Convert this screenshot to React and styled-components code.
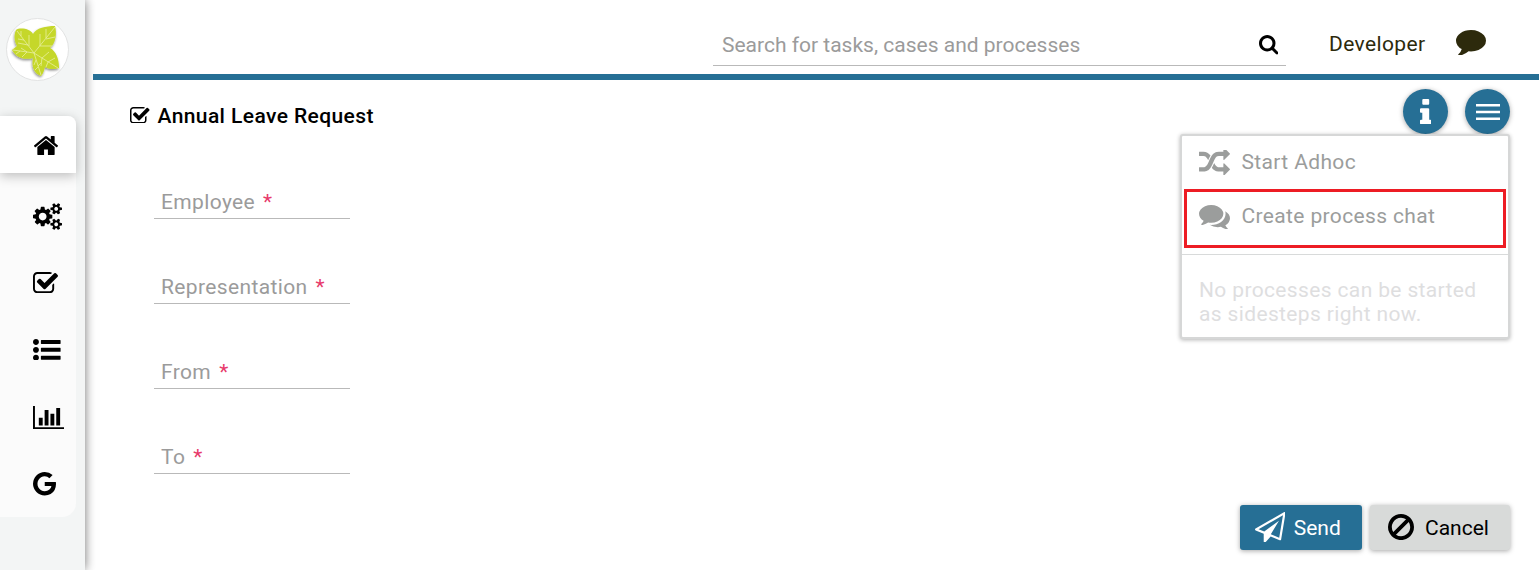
import React from 'react';
import styled, { createGlobalStyle } from 'styled-components';

const GlobalStyle = createGlobalStyle`
  *, *::before, *::after { box-sizing: border-box; }
  html, body, #root { height: 100%; margin: 0; }
  body {
    background: #fff;
    color: #000;
    font-family: Roboto, "Liberation Sans", sans-serif;
    font-size: 21px;
    overflow: hidden;
  }
`;

const BLUE = '#266f95';

/* Each entry: [minX, minY, width, height, path] */
const GLYPHS = {
  home: [97, 253, 1599, 1283, 'M1472 992v480q0 26-19 45t-45 19h-384v-384h-256v384h-384q-26 0-45-19t-19-45v-480q0-1 .5-3t.5-3l575-474 575 474q1 2 1 6zm223-69l-62 74q-8 9-21 11h-3q-13 0-21-7l-692-577-692 577q-12 8-24 7-13-2-21-11l-62-74q-8-10-7-23.5t11-21.5l719-599q32-26 76-26t76 26l244 204v-195q0-14 9-23t23-9h192q14 0 23 9t9 23v408l219 182q10 8 11 21.5t-7 23.5z'],
  cogs: [-64, 0, 1920, 1792, 'M832 896q0-106-75-181t-181-75-181 75-75 181 75 181 181 75 181-75 75-181zm768 512q0-52-38-90t-90-38-90 38-38 90q0 53 37.5 90.5t90.5 37.5 90.5-37.5 37.5-90.5zm0-1024q0-52-38-90t-90-38-90 38-38 90q0 53 37.5 90.5t90.5 37.5 90.5-37.5 37.5-90.5zm-384 421v185q0 10-7 19.5t-16 10.5l-155 24q-11 35-32 76 34 48 90 115 7 11 7 20 0 12-7 19-23 30-82.5 89.5t-78.5 59.5q-11 0-21-7l-115-90q-37 19-77 31-11 108-23 155-7 24-30 24h-186q-11 0-20-7.5t-10-17.5l-23-153q-34-10-75-31l-118 89q-7 7-20 7-11 0-21-8-144-133-144-160 0-9 7-19 10-14 41-53t47-61q-23-44-35-82l-152-24q-10-1-17-9.5t-7-19.5v-185q0-10 7-19.5t16-10.5l155-24q11-35 32-76-34-48-90-115-7-11-7-20 0-12 7-20 22-30 82-89t79-59q11 0 21 7l115 90q34-18 77-32 11-108 23-154 7-24 30-24h186q11 0 20 7.5t10 17.5l23 153q34 10 75 31l118-89q8-7 20-7 11 0 21 8 144 133 144 160 0 8-7 19-12 16-42 54t-45 60q23 48 34 82l152 23q10 2 17 10.5t7 19.5zm640 533v140q0 16-149 31-12 27-30 52 51 113 51 138 0 4-4 7-122 71-124 71-8 0-46-47t-52-68q-20 2-30 2t-30-2q-14 21-52 68t-46 47q-2 0-124-71-4-3-4-7 0-25 51-138-18-25-30-52-149-15-149-31v-140q0-16 149-31 13-29 30-52-51-113-51-138 0-4 4-7 4-2 35-20t59-34 30-16q8 0 46 46.5t52 67.5q20-2 30-2t30 2q51-71 92-112l6-2q4 0 124 70 4 3 4 7 0 25-51 138 17 23 30 52 149 15 149 31zm0-1024v140q0 16-149 31-12 27-30 52 51 113 51 138 0 4-4 7-122 71-124 71-8 0-46-47t-52-68q-20 2-30 2t-30-2q-14 21-52 68t-46 47q-2 0-124-71-4-3-4-7 0-25 51-138-18-25-30-52-149-15-149-31v-140q0-16 149-31 13-29 30-52-51-113-51-138 0-4 4-7 4-2 35-20t59-34 30-16q8 0 46 46.5t52 67.5q20-2 30-2t30 2q51-71 92-112l6-2q4 0 124 70 4 3 4 7 0 25-51 138 17 23 30 52 149 15 149 31z'],
  check: [64, 128, 1663, 1408, 'M1472 930v318q0 119-84.5 203.5t-203.5 84.5h-832q-119 0-203.5-84.5t-84.5-203.5v-832q0-119 84.5-203.5t203.5-84.5h832q63 0 117 25 15 7 18 23 3 17-9 29l-49 49q-10 10-23 10-3 0-9-2-23-6-45-6h-832q-66 0-113 47t-47 113v832q0 66 47 113t113 47h832q66 0 113-47t47-113v-254q0-13 9-22l64-64q10-10 23-10 6 0 12 3 20 8 20 29zm231-489l-814 814q-24 24-57 24t-57-24l-430-430q-24-24-24-57t24-57l110-110q24-24 57-24t57 24l263 263 647-647q24-24 57-24t57 24l110 110q24 24 24 57t-24 57z'],
  list: [0, 192, 1792, 1408, 'M384 1408q0 80-56 136t-136 56-136-56-56-136 56-136 136-56 136 56 56 136zm0-512q0 80-56 136t-136 56-136-56-56-136 56-136 136-56 136 56 56 136zm1408 416v192q0 13-9.5 22.5t-22.5 9.5h-1216q-13 0-22.5-9.5t-9.5-22.5v-192q0-13 9.5-22.5t22.5-9.5h1216q13 0 22.5 9.5t9.5 22.5zm-1408-928q0 80-56 136t-136 56-136-56-56-136 56-136 136-56 136 56 56 136zm1408 416v192q0 13-9.5 22.5t-22.5 9.5h-1216q-13 0-22.5-9.5t-9.5-22.5v-192q0-13 9.5-22.5t22.5-9.5h1216q13 0 22.5 9.5t9.5 22.5zm0-512v192q0 13-9.5 22.5t-22.5 9.5h-1216q-13 0-22.5-9.5t-9.5-22.5v-192q0-13 9.5-22.5t22.5-9.5h1216q13 0 22.5 9.5t9.5 22.5z'],
  chart: [0, 128, 2048, 1536, 'M640 896v512h-256v-512h256zm384-512v1024h-256v-1024h256zm1024 1152v128h-2048v-1536h128v1408h1920zm-640-896v768h-256v-768h256zm384-384v1152h-256v-1152h256z'],
  google: [128, 128, 1505, 1536, 'M896 786h725q12 67 12 128 0 217-91 387.5t-259.5 266.5-386.5 96q-157 0-299-60.5t-245-163.5-163.5-245-60.5-299 60.5-299 163.5-245 245-163.5 299-60.5q300 0 515 201l-209 201q-123-119-306-119-129 0-238.5 65t-173.5 176.5-64 243.5 64 243.5 173.5 176.5 238.5 65q87 0 160-24t120-60 82-82 51.5-87 22.5-78h-436v-264z'],
  search: [64, 128, 1664, 1664, 'M1216 832q0-185-131.5-316.5t-316.5-131.5-316.5 131.5-131.5 316.5 131.5 316.5 316.5 131.5 316.5-131.5 131.5-316.5zm512 832q0 52-38 90t-90 38q-54 0-90-38l-343-342q-179 124-399 124-143 0-273.5-55.5t-225-150-150-225-55.5-273.5 55.5-273.5 150-225 225-150 273.5-55.5 273.5 55.5 225 150 150 225 55.5 273.5q0 220-124 399l343 343q37 37 37 90z'],
  comment: [0, 256, 1792, 1536, 'M1792 896q0 174-120 321.5t-326 233-450 85.5q-70 0-145-8-198 175-460 242-49 14-114 22-17 2-30.5-9t-17.5-29v-1q-3-4-.5-12t2-10 4.5-9.5l6-9 7-8.5 8-9q7-8 31-34.5t34.5-38 31-39.5 32.5-51 27-59 26-76q-157-89-247.5-220t-90.5-281q0-130 71-248.5t191-204.5 286-136.5 348-50.5q244 0 450 85.5t326 233 120 321.5z'],
  comments: [0, 256, 1792, 1408, 'M1408 768q0 139-94 257t-256.5 186.5-353.5 68.5q-86 0-176-16-124 88-278 128-36 9-86 16h-3q-11 0-20.5-8t-11.5-21q-1-3-1-6.5t.5-6.5 2-6l2.5-5 3.5-5.5 4-5 4.5-5 4-4.5q5-6 23-25t26-29.5 22.5-29 25-38.5 20.5-44q-124-72-195-177t-71-224q0-139 94-257t256.5-186.5 353.5-68.5 353.5 68.5 256.5 186.5 94 257zm384 256q0 120-71 224.5t-195 176.5q10 24 20.5 44t25 38.5 22.5 29 26 29.5 23 25q1 1 4 4.5t4.5 5 4 5 3.5 5.5l2.5 5 2 6 .5 6.5-1 6.5q-3 14-13 22t-22 7q-50-7-86-16-154-40-278-128-90 16-176 16-271 0-472-132 58 4 88 4 161 0 309-45t264-129q125-92 192-212t67-254q0-77-23-152 129 71 204 178t75 230z'],
  random: [0, 160, 1792, 1472, 'M666 481q-60 92-137 273-22-45-37-72.5t-40.5-63.5-51-56.5-63-35-81.5-14.5h-224q-14 0-23-9t-9-23v-192q0-14 9-23t23-9h224q250 0 410 225zm1126 799q0 14-9 23l-320 320q-9 9-23 9-13 0-22.5-9.5t-9.5-22.5v-192q-32 0-85 .5t-81 1-73-1-71-5-64-10.5-63-18.5-58-28.5-59-40-55-53.5-56-69.5q59-93 136-273 22 45 37 72.5t40.5 63.5 51 56.5 63 35 81.5 14.5h256v-192q0-14 9-23t23-9q12 0 24 10l319 319q9 9 9 23zm0-896q0 14-9 23l-320 320q-9 9-23 9-13 0-22.5-9.5t-9.5-22.5v-192h-256q-48 0-87 15t-69 45-51 61.5-45 77.5q-32 62-78 171-29 66-49.5 111t-54 105-64 100-74 83-90 68.5-106.5 42-128 16.5h-224q-14 0-23-9t-9-23v-192q0-14 9-23t23-9h224q48 0 87-15t69-45 51-61.5 45-77.5q32-62 78-171 29-66 49.5-111t54-105 64-100 74-83 90-68.5 106.5-42 128-16.5h256v-192q0-14 9-23t23-9q12 0 24 10l319 319q9 9 9 23z'],
  info: [576, 128, 640, 1408, 'M1216 1344v128q0 26-19 45t-45 19h-512q-26 0-45-19t-19-45v-128q0-26 19-45t45-19h64v-384h-64q-26 0-45-19t-19-45v-128q0-26 19-45t45-19h384q26 0 45 19t19 45v576h64q26 0 45 19t19 45zm-128-1152v192q0 26-19 45t-45 19h-256q-26 0-45-19t-19-45v-192q0-26 19-45t45-19h256q26 0 45 19t19 45z'],
  menu: [0, 0, 24, 16, 'M0 0h24v2.6h-24zM0 6.7h24v2.6h-24zM0 13.4h24v2.6h-24z'],
  plane: [0, 0, 1792, 1792, 'M1764 11q33 24 27 64l-256 1536q-5 29-32 45-14 8-31 8-11 0-24-5l-527-215-298 327q-18 21-47 21-14 0-23-4-19-7-30-23.5t-11-36.5v-452l-472-193q-37-14-40-55-3-39 32-59l1664-960q35-21 68 2zm-342 1499l221-1323-1434 827 336 137 863-639-478 797z'],
  ban: [128, 122, 1536, 1542, 'M1440 893q0-161-87-295l-754 753q137 89 297 89 111 0 211.5-43.5t173.5-116.5 116-174.5 43-212.5zm-999 299l755-754q-135-91-300-91-148 0-273 73t-198 199-73 274q0 162 89 299zm1223-299q0 157-61 300t-163.5 246-245 164-298.5 61-298.5-61-245-164-163.5-246-61-300 61-299.5 163.5-245.5 245-164 298.5-61 298.5 61 245 164 163.5 245.5 61 299.5z'],
};

const IconSvg = styled.svg`
  display: block;
  flex: none;
  fill: currentColor;
  margin-bottom: ${(p) => p.$lift}px;
`;

function Icon({ name, width, lift = 0 }) {
  const [x, y, w, h, d] = GLYPHS[name];
  return (
    <IconSvg $lift={lift} viewBox={`${x} ${y} ${w} ${h}`} width={width} height={(width * h) / w} aria-hidden="true">
      <path d={d} />
    </IconSvg>
  );
}

const Shell = styled.div`
  display: flex;
  height: 100%;
`;

const Sidebar = styled.aside`
  flex: none;
  width: 85px;
  background: #f3f5f5;
  box-shadow: 0 0 10px rgba(0, 0, 0, 0.55);
`;

const Logo = styled.div`
  width: 63px;
  height: 63px;
  margin: 18px 0 35px 6px;
  border: 1px solid #e2e3e3;
  border-radius: 50%;
  background: #fff;
`;

const Nav = styled.nav`
  width: 76px;
  height: 401px;
  background: #fbfbfb;
  border-radius: 0 8px 14px 0;
`;

const NavItem = styled.a`
  display: flex;
  align-items: center;
  height: ${(p) => (p.$active ? 57 : 67)}px;
  margin-bottom: ${(p) => (p.$active ? 10 : 0)}px;
  padding: ${(p) => (p.$active ? '2px 0 0 34px' : '0 0 0 33.4px')};
  background: ${(p) => (p.$active ? '#fff' : 'transparent')};
  border-radius: 0 8px 0 0;
  box-shadow: ${(p) => (p.$active ? '0 3px 12px rgba(0, 0, 0, 0.25)' : 'none')};
`;

const Page = styled.div`
  flex: 1;
  display: flex;
  flex-direction: column;
  margin-left: 8px;
`;

const Header = styled.header`
  display: flex;
  height: 80px;
  justify-content: flex-end;
  border-bottom: 6px solid ${BLUE};
  padding-right: 53px;
`;

const SearchBox = styled.div`
  display: flex;
  align-items: center;
  justify-content: space-between;
  width: 573px;
  height: 42px;
  margin-top: 24px;
  padding: 0 8px 0 9px;
  border-bottom: 1px solid #b9b9b9;
`;

const Placeholder = styled.span`
  color: #9b9b9b;
`;

const User = styled.div`
  display: flex;
  align-items: center;
  justify-content: space-between;
  width: 157px;
  height: 42px;
  margin: 23px 0 0 43px;
  color: #2d2a0c;
  letter-spacing: 0.38px;
`;

const Body = styled.main`
  flex: 1;
  display: flex;
  flex-direction: column;
  padding: 9px 29px 20px 37px;
`;

const TitleRow = styled.div`
  display: flex;
  justify-content: space-between;
  height: 45px;
`;

const Title = styled.h1`
  display: flex;
  align-items: center;
  gap: 8px;
  height: 53px;
  margin: 0;
  font-size: 21px;
  font-weight: 500;
  letter-spacing: 0.4px;
`;

const Actions = styled.div`
  position: relative;
  display: flex;
  gap: 17px;
`;

const RoundButton = styled.button`
  display: flex;
  align-items: center;
  justify-content: center;
  width: 45px;
  height: 45px;
  padding: 0;
  border: 0;
  border-radius: 50%;
  background: ${BLUE};
  color: #fff;
  box-shadow: 0 1px 5px rgba(0, 0, 0, 0.35);
`;

const Menu = styled.div`
  position: absolute;
  top: 45px;
  right: 0;
  width: 330px;
  height: 205px;
  border: 2px solid #d6d7d7;
  border-radius: 3px;
  background: #fff;
  box-shadow: 0 1px 4px rgba(0, 0, 0, 0.3);
  letter-spacing: 0.36px;
`;

const MenuItem = styled.div`
  display: flex;
  align-items: center;
  gap: 11.5px;
  height: ${(p) => (p.$marked ? 59 : 53)}px;
  margin: ${(p) => (p.$marked ? '0 2px' : '0')};
  padding: ${(p) => (p.$marked ? '0 0 5px 12px' : '0 0 2px 17px')};
  border: ${(p) => (p.$marked ? '3px solid #ed1c24' : '0')};
  color: #9b9d9c;

  svg {
    position: relative;
    top: 1px;
  }
`;

const MenuNote = styled.p`
  margin: 6px 0 0;
  padding: 23px 17px 0;
  border-top: 1px solid #d8dada;
  color: #dededf;
  line-height: 24px;
`;

const Form = styled.form`
  display: flex;
  flex-direction: column;
  gap: 50px;
  margin: 50px 0 0 24px;
`;

const Field = styled.label`
  width: 196px;
  height: 35px;
  padding-left: 7px;
  border-bottom: 1px solid #b9b9b9;
  color: #9b9b9b;
  line-height: 37px;
  letter-spacing: 0.37px;
`;

const Required = styled.span`
  margin-left: 8px;
  color: #e73a6b;
`;

const Footer = styled.footer`
  display: flex;
  justify-content: flex-end;
  gap: 8px;
  margin-top: auto;
`;

const Button = styled.button`
  display: flex;
  align-items: center;
  gap: ${(p) => (p.$primary ? 8.5 : 11)}px;
  width: ${(p) => (p.$primary ? 122 : 140)}px;
  height: 45px;
  padding: 0 0 0 ${(p) => (p.$primary ? 14.7 : 18)}px;
  border: 0;
  border-radius: 3px;
  background: ${(p) => (p.$primary ? BLUE : '#d8dad9')};
  color: ${(p) => (p.$primary ? '#fff' : '#000')};
  font: inherit;
  letter-spacing: 0;
  box-shadow: 0 1px 5px rgba(0, 0, 0, 0.35);
`;

function Leaf() {
  return (
    <svg width="61" height="61" viewBox="7 19 61 61" aria-hidden="true">
      <defs>
        <filter id="leafShadow" x="-20%" y="-20%" width="140%" height="140%">
          <feDropShadow dx="-0.5" dy="1.5" stdDeviation="0.8" floodOpacity="0.45" />
        </filter>
      </defs>
      <path
        filter="url(#leafShadow)"
        fill="#c5d72c"
        d="M16 30 C20 27 31 29 33 34 C36 28 46 26 55 26 C57 33 56 43 50 48 C56 51 59 59 59 68 C54 70 48 69 45 67 C44 71 43 74 41 76 C35 74 31 68 33 58 C26 60 17 59 12 50 L17 46 C14 41 14 34 16 30Z"
      />
      <g fill="none" stroke="#e9ef9f" strokeWidth="0.8">
        <path d="M34 53L17 31M34 53L55 27M34 53L58 68M34 53L41 75M34 53L13 50" />
        <path d="M29 46v-11M24 40l-6-1M28 45l-10-2M21 36v-5M40 46v-12M46 38v-9M40 46l12 0M46 39l9-2M42 58l7-6M48 62l7-4M42 58l-1 8M48 62l-2 5M36 60l-2 5M38 66l3-3M38 67l-3 3M27 52l-6-4M27 52l-5 5M20 51l-4 3" />
      </g>
    </svg>
  );
}

/* Icon name, width, lift above the row's centre line */
const NAV = [
  ['home', 24, 0],
  ['cogs', 29, 0],
  ['check', 25, 2],
  ['list', 27.6, 2],
  ['chart', 31, 0],
  ['google', 23, 0.6],
];

const FIELDS = ['Employee', 'Representation', 'From', 'To'];

export default function App() {
  return (
    <>
      <GlobalStyle />
      <Shell>
        <Sidebar>
          <Logo><Leaf /></Logo>
          <Nav>
            {NAV.map(([name, width, lift]) => (
              <NavItem key={name} $active={name === 'home'}>
                <Icon name={name} width={width} lift={lift} />
              </NavItem>
            ))}
          </Nav>
        </Sidebar>
        <Page>
          <Header>
            <SearchBox>
              <Placeholder>Search for tasks, cases and processes</Placeholder>
              <Icon name="search" width={19.5} lift={-1} />
            </SearchBox>
            <User>
              Developer
              <Icon name="comment" width={30} lift={3} />
            </User>
          </Header>
          <Body>
            <TitleRow>
              <Title>
                <Icon name="check" width={19.5} lift={1} />
                Annual Leave Request
              </Title>
              <Actions>
                <RoundButton aria-label="Info"><Icon name="info" width={11.5} /></RoundButton>
                <RoundButton aria-label="Menu"><Icon name="menu" width={24} /></RoundButton>
                <Menu>
                  <MenuItem>
                    <Icon name="random" width={31} />
                    Start Adhoc
                  </MenuItem>
                  <MenuItem $marked>
                    <Icon name="comments" width={31} />
                    Create process chat
                  </MenuItem>
                  <MenuNote>No processes can be started as sidesteps right now.</MenuNote>
                </Menu>
              </Actions>
            </TitleRow>
            <Form>
              {FIELDS.map((label) => (
                <Field key={label}>
                  {label}
                  <Required>*</Required>
                </Field>
              ))}
            </Form>
            <Footer>
              <Button $primary>
                <Icon name="plane" width={30.5} lift={1} />
                Send
              </Button>
              <Button>
                <Icon name="ban" width={26} lift={1} />
                Cancel
              </Button>
            </Footer>
          </Body>
        </Page>
      </Shell>
    </>
  );
}
